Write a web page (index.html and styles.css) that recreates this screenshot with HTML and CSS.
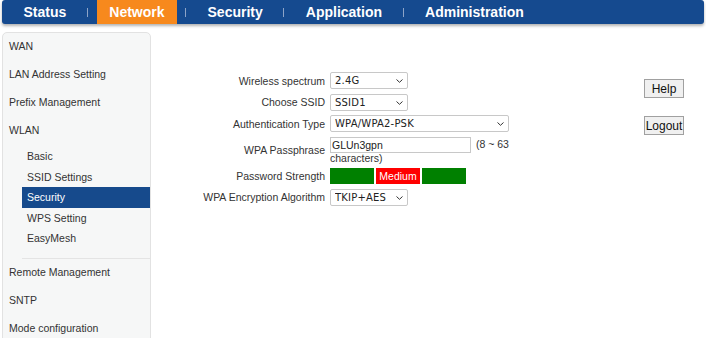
FILE: index.html
```html
<!DOCTYPE html>
<html lang="en">
<head>
    <meta charset="UTF-8">
    <title>WLAN Security</title>
    <link rel="stylesheet" href="styles.css">
</head>
<body>

    <div class="topnav">
        <a class="nav-item">Status</a>
        <span class="nav-sep"></span>
        <a class="nav-item active">Network</a>
        <span class="nav-sep"></span>
        <a class="nav-item">Security</a>
        <span class="nav-sep"></span>
        <a class="nav-item">Application</a>
        <span class="nav-sep"></span>
        <a class="nav-item">Administration</a>
    </div>

    <div class="page">
        <ul class="sidebar">
            <li class="menu-item">WAN</li>
            <li class="menu-item">LAN Address Setting</li>
            <li class="menu-item">Prefix Management</li>
            <li class="menu-item">WLAN</li>
            <li>
                <ul class="submenu">
                    <li class="sub-item">Basic</li>
                    <li class="sub-item">SSID Settings</li>
                    <li class="sub-item selected">Security</li>
                    <li class="sub-item">WPS Setting</li>
                    <li class="sub-item">EasyMesh</li>
                </ul>
            </li>
            <li class="menu-item">Remote Management</li>
            <li class="menu-item">SNTP</li>
            <li class="menu-item">Mode configuration</li>
        </ul>

        <div class="main">
            <form class="settings">
                <label class="field-label">Wireless spectrum</label>
                <div class="field">
                    <span class="select-wrap">
                        <select class="select-short"><option>2.4G</option></select>
                        <svg class="chevron" width="7" height="4" viewBox="0 0 7 4"><path d="M0.5 0.5 L3.5 3.3 L6.5 0.5" fill="none" stroke="#333" stroke-width="1"/></svg>
                    </span>
                </div>

                <label class="field-label">Choose SSID</label>
                <div class="field">
                    <span class="select-wrap">
                        <select class="select-short"><option>SSID1</option></select>
                        <svg class="chevron" width="7" height="4" viewBox="0 0 7 4"><path d="M0.5 0.5 L3.5 3.3 L6.5 0.5" fill="none" stroke="#333" stroke-width="1"/></svg>
                    </span>
                </div>

                <label class="field-label">Authentication Type</label>
                <div class="field">
                    <span class="select-wrap">
                        <select class="select-long"><option>WPA/WPA2-PSK</option></select>
                        <svg class="chevron" width="7" height="4" viewBox="0 0 7 4"><path d="M0.5 0.5 L3.5 3.3 L6.5 0.5" fill="none" stroke="#333" stroke-width="1"/></svg>
                    </span>
                </div>

                <label class="field-label">WPA Passphrase</label>
                <div class="field">
                    <input type="text" class="pass-input" value="GLUn3gpn"> (8 ~ 63 characters)
                </div>

                <label class="field-label">Password Strength</label>
                <div class="field strength">
                    <span class="bar green"></span>
                    <span class="bar red">Medium</span>
                    <span class="bar green"></span>
                </div>

                <label class="field-label">WPA Encryption Algorithm</label>
                <div class="field">
                    <span class="select-wrap">
                        <select class="select-short"><option>TKIP+AES</option></select>
                        <svg class="chevron" width="7" height="4" viewBox="0 0 7 4"><path d="M0.5 0.5 L3.5 3.3 L6.5 0.5" fill="none" stroke="#333" stroke-width="1"/></svg>
                    </span>
                </div>
            </form>

            <div class="side-buttons">
                <button type="button">Help</button>
                <button type="button">Logout</button>
            </div>
        </div>
    </div>

</body>
</html>
```

FILE: styles.css
```css
/* 기본 스타일 */
body {
    margin: 0;
    font-family: 'Liberation Sans', Arial, sans-serif;
    font-size: 10.5px;
    color: #333;
    background-color: #fff;
    overflow: hidden;
}

/* 상단 메뉴 */
.topnav {
    display: flex;
    align-items: center;
    height: 24px;
    margin: 0 2px;
    padding-left: 9px;
    background-color: #154a8f;
    border-radius: 3px;
    box-shadow: 0 2px 3px rgba(0, 0, 0, 0.3);
}

.nav-item {
    display: flex;
    align-items: center;
    height: 24px;
    padding: 0 12.5px;
    color: #fff;
    font-size: 14px;
    font-weight: bold;
}

.nav-item.active {
    background-color: #f7891d;
}

.nav-sep {
    width: 1px;
    height: 9px;
    margin: 0 9px 0 8px;
    background-color: #8da4c8;
}

.page {
    display: flex;
    align-items: flex-start;
}

/* 왼쪽 메뉴 */
.sidebar {
    list-style: none;
    width: 147px;
    margin: 8px 0 0 2px;
    padding: 0;
    background-color: #f6f7f7;
    border: 1px solid #e2e2e2;
    border-radius: 5px 5px 0 0;
}

.menu-item {
    height: 28px;
    line-height: 27px;
    padding-left: 6px;
}

.submenu {
    list-style: none;
    margin: 1px 0 0 19px;
    padding: 0 0 9px;
    border-bottom: 1px solid #e4e4e4;
}

.sub-item {
    height: 20.5px;
    line-height: 20px;
    padding-left: 5px;
}

.sub-item.selected {
    background-color: #164a8c;
    color: #fff;
}

/* 본문 */
.main {
    flex: 1;
    display: flex;
    align-items: flex-start;
}

.settings {
    display: grid;
    grid-template-columns: 174px 181px;
    column-gap: 5px;
    row-gap: 4.5px;
    align-items: center;
    margin-top: 48px;
}

.field-label {
    text-align: right;
}

.field {
    line-height: 11px;
}

.select-wrap {
    position: relative;
    display: inline-block;
    vertical-align: top;
}

select {
    display: block;
    height: 17px;
    padding: 0 0 0 4px;
    appearance: none;
    font-family: 'DejaVu Sans', sans-serif;
    font-size: 10px;
    letter-spacing: 0.2px;
    color: #222;
    background-color: #fff;
    border: 1px solid #c8c8c8;
    border-radius: 2px;
}

.chevron {
    position: absolute;
    right: 5px;
    top: 7px;
    pointer-events: none;
}

.select-short {
    width: 78px;
}

.select-long {
    width: 179px;
}

.pass-input {
    width: 141px;
    height: 16px;
    box-sizing: border-box;
    margin: 0 2px 0 0;
    padding: 0 1px;
    font-family: 'Liberation Sans', Arial, sans-serif;
    font-size: 10.5px;
    color: #222;
    border: 1px solid #c8c8c8;
    vertical-align: middle;
}

.strength {
    display: flex;
    gap: 2px;
}

.bar {
    width: 44px;
    height: 16px;
    line-height: 16px;
    text-align: center;
    color: #fff;
}

.green {
    background-color: #008000;
}

.red {
    background-color: #ff0000;
}

/* 오른쪽 버튼 */
.side-buttons {
    display: flex;
    flex-direction: column;
    gap: 18px;
    margin: 55px 22px 0 auto;
}

button {
    width: 40px;
    height: 19px;
    padding: 0;
    font-family: 'Liberation Sans', Arial, sans-serif;
    font-size: 12px;
    color: #111;
    background-color: #f0f0f0;
    border: 1px solid #a0a0a0;
    border-radius: 0;
}
```
